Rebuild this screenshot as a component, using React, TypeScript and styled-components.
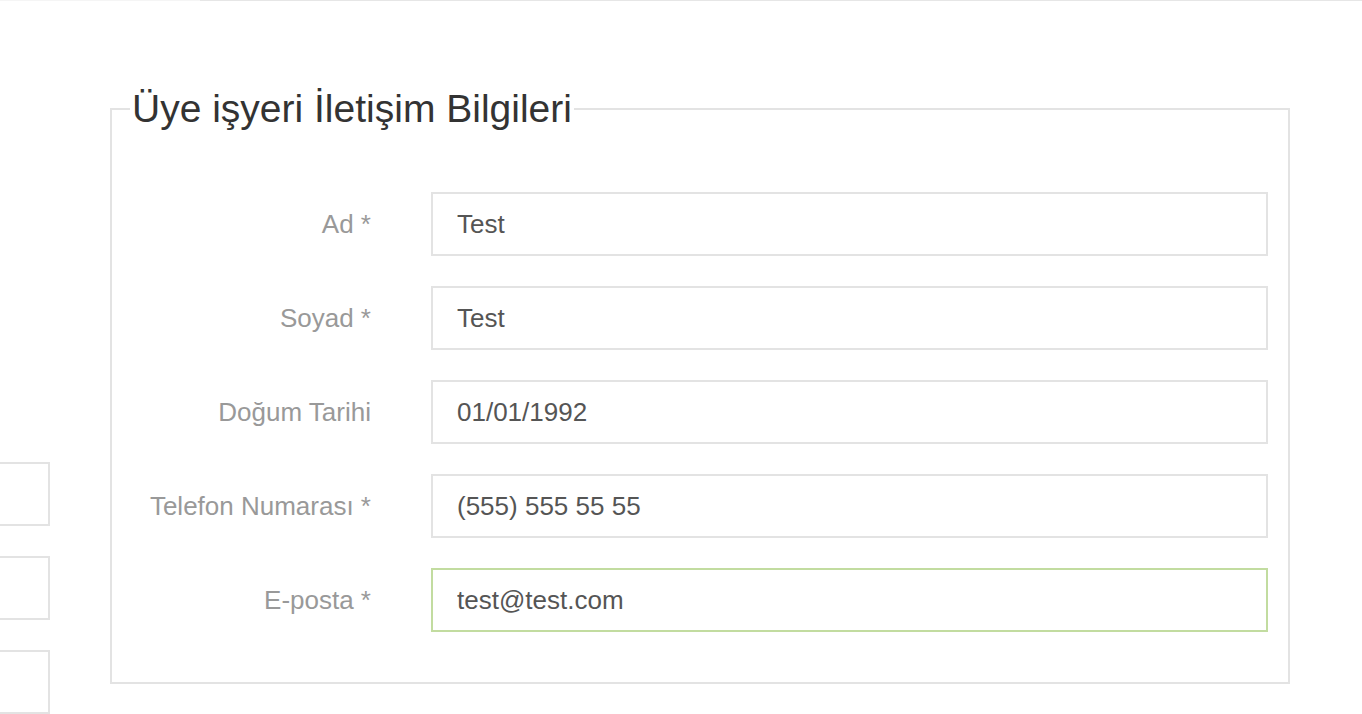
import styled, { createGlobalStyle } from "styled-components";

const GlobalStyle = createGlobalStyle`
  html, body {
    margin: 0;
    padding: 0;
    background: #fff;
    overflow: hidden;
    font-family: "Liberation Sans", Arial, sans-serif;
  }
`;

const Page = styled.div`
  width: 1362px;
  height: 714px;
`;

const TopRule = styled.div`
  height: 1px;
  background: linear-gradient(to right, #f5f5f5 200px, #e6e6e6 200px);
`;

const Main = styled.div`
  display: flex;
  align-items: flex-start;
`;

const SideColumn = styled.div`
  width: 50px;
  padding-top: 461px;
  display: flex;
  flex-direction: column;
  gap: 30px;
`;

const SideBox = styled.div`
  width: 300px;
  height: 64px;
  margin-left: -250px;
  box-sizing: border-box;
  border: 2px solid #e3e3e3;
`;

const Fieldset = styled.fieldset`
  margin: 88px 0 0 60px;
  width: 1180px;
  box-sizing: border-box;
  padding: 0 20px 50px 0;
  border: 2px solid #e3e3e3;
  min-width: 0;
`;

const Legend = styled.legend`
  margin-left: 18px;
  padding: 0 2px;
  font-size: 39px;
  line-height: 40px;
  color: #333;
`;

const Rows = styled.div`
  padding-top: 63px;
  display: flex;
  flex-direction: column;
  gap: 30px;
`;

const Row = styled.div`
  display: flex;
  align-items: center;
  gap: 60px;
`;

const Label = styled.label`
  width: 259px;
  flex-shrink: 0;
  text-align: right;
  font-size: 26px;
  color: #999;
`;

const Input = styled.input<{ $focused?: boolean }>`
  flex: 1;
  height: 64px;
  box-sizing: border-box;
  padding: 0 24px;
  border: 2px solid ${(p) => (p.$focused ? "#c2dca0" : "#e3e3e3")};
  outline: none;
  font-family: "Liberation Sans", Arial, sans-serif;
  font-size: 26px;
  color: #555;
  background: #fff;
`;

const fields = [
  { label: "Ad *", value: "Test" },
  { label: "Soyad *", value: "Test" },
  { label: "Doğum Tarihi", value: "01/01/1992" },
  { label: "Telefon Numarası *", value: "(555) 555 55 55" },
  { label: "E-posta *", value: "test@test.com", focused: true },
];

export default function App() {
  return (
    <Page>
      <GlobalStyle />
      <TopRule />
      <Main>
        <SideColumn>
          <SideBox />
          <SideBox />
          <SideBox />
        </SideColumn>
        <Fieldset>
          <Legend>Üye işyeri İletişim Bilgileri</Legend>
          <Rows>
            {fields.map((f) => (
              <Row key={f.label}>
                <Label>{f.label}</Label>
                <Input defaultValue={f.value} readOnly $focused={f.focused} />
              </Row>
            ))}
          </Rows>
        </Fieldset>
      </Main>
    </Page>
  );
}
